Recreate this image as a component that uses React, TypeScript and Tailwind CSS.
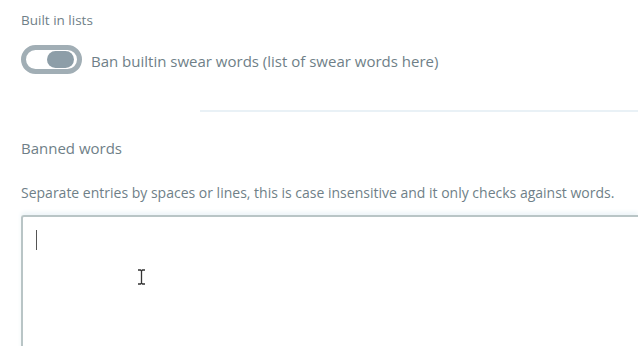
import React from "react";

const App: React.FC = () => {
  return (
    <div
      className="w-[638px] h-[346px] overflow-hidden bg-white text-[#6f7f88]"
      style={{ fontFamily: '"Open Sans", sans-serif' }}
    >
      <div className="px-[21px] pt-[11px]">
        <div className="text-[13.5px] leading-[18px]">Built in lists</div>
        <div className="flex items-center gap-[9px] mt-[16px]">
          <div className="w-[61px] h-[29px] rounded-full border-[5px] border-[#a1aeb5] flex items-center justify-end pr-[3px]">
            <div className="w-[27px] h-[17px] rounded-full bg-[#8d9ea8]" />
          </div>
          <span className="text-[15px] leading-[20px] mt-[2px]">
            Ban builtin swear words (list of swear words here)
          </span>
        </div>
      </div>

      <div className="mt-[36px] ml-[200px] h-[2px] bg-[#e9f1f6]" />

      <div className="px-[21px] pt-[26px]">
        <div className="text-[15px] leading-[20px]">Banned words</div>
        <div className="mt-[26px] text-[14px] leading-[18px] whitespace-nowrap">
          Separate entries by spaces or lines, this is case insensitive and it only checks against words.
        </div>
      </div>

      <div className="relative mt-[13px] ml-[21px] h-[140px] border-l-2 border-t-2 border-[#b9c5c6] rounded-tl-[3px] shadow-[0_-3px_4px_#eef5f8]">
        <div className="absolute left-[13px] top-[13px] w-[1px] h-[20px] bg-[#555]" />
        <svg
          className="absolute left-[114px] top-[52px]"
          width="9"
          height="16"
          viewBox="0 0 9 16"
        >
          <path
            d="M1 1h2.5l1 1 1-1H8M4.5 2v12M1 15h2.5l1-1 1 1H8"
            fill="none"
            stroke="#333"
            strokeWidth="1.3"
          />
        </svg>
      </div>
    </div>
  );
};

export default App;
